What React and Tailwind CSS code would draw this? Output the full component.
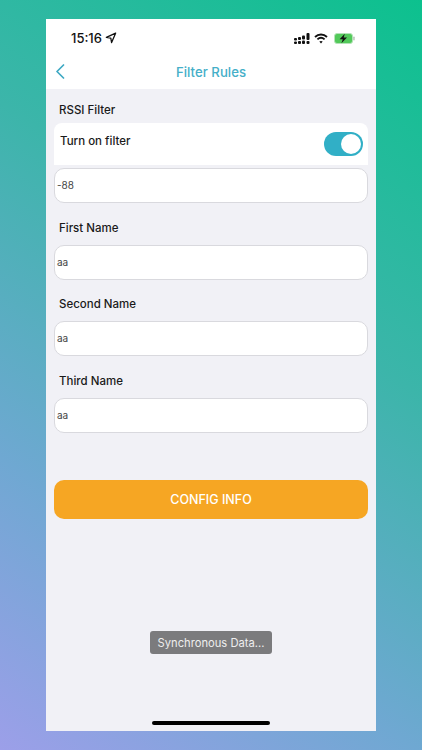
import React from "react";

function StatusIcons() {
  return (
    <div className="flex items-center gap-[4px]">
      <svg width="16" height="11" viewBox="0 0 16 11" fill="#111">
        <rect x="0" y="5" width="3" height="2.6" rx="1" />
        <rect x="0" y="8.4" width="3" height="2.6" rx="1" />
        <rect x="4" y="4" width="3" height="3" rx="1" />
        <rect x="4" y="8" width="3" height="3" rx="1" />
        <rect x="8" y="2.5" width="3" height="4" rx="1" />
        <rect x="8" y="7.4" width="3" height="3.6" rx="1" />
        <rect x="12.5" y="0" width="3" height="7" rx="1" />
        <rect x="12.5" y="8" width="3" height="3" rx="1" />
      </svg>
      <svg width="14" height="11" viewBox="0 0 14 11" fill="none" stroke="#111" strokeWidth="1.9">
        <path d="M1 4 C4.5 0.7 9.5 0.7 13 4" />
        <path d="M3.4 6.4 C5.5 4.5 8.5 4.5 10.6 6.4" />
        <path d="M7 10.6 L5.3 8.6 C6.3 7.9 7.7 7.9 8.7 8.6 Z" fill="#111" stroke="none" />
      </svg>
      <svg width="21" height="11" viewBox="0 0 21 11" className="ml-[2px]">
        <rect x="0.5" y="0.5" width="18" height="10" rx="2.5" fill="#52c95a" stroke="#b5e3b8" />
        <rect x="19.2" y="3.6" width="1.5" height="3.8" rx="0.7" fill="#b5c4b5" />
        <path d="M10.8 0.8 L5.6 6.2 H8.8 L7.4 10.2 L13 4.6 H9.7 Z" fill="#111" />
      </svg>
    </div>
  );
}

function Field({ value }) {
  return (
    <div className="mx-2 flex h-[35px] items-center rounded-[10px] border border-[#d9d9de] bg-white pl-[2px] text-[10px] text-[#444]">
      {value}
    </div>
  );
}

function Label({ children, className }) {
  return <div className={"pl-[13px] text-[11.5px] font-medium leading-[16px] text-[#1a1a1a] " + className}>{children}</div>;
}

export default function App() {
  return (
    <div className="h-[750px] w-[422px] overflow-hidden bg-[linear-gradient(215deg,#0cc18e_0%,#3cb5aa_38%,#6fa8d2_72%,#9c9fe9_100%)] px-[46px] pt-[19px] font-['Inter','Liberation_Sans',sans-serif]">
      <div className="relative flex h-[712px] w-[330px] flex-col bg-[#f1f1f6]">
        <div className="h-[70px] shrink-0 bg-white">
          <div className="flex items-center justify-between pl-[25px] pr-[21px] pt-[11px]">
            <div className="flex items-center gap-[3px] text-[13px] font-medium leading-[16px] text-[#111]">
              15:16
              <svg width="12" height="12" viewBox="0 0 12 12" fill="none" stroke="#111" strokeWidth="1.3" strokeLinejoin="round">
                <path d="M10.6 1.2 L1.4 5.4 L5.8 6.2 L6.6 10.6 Z" />
              </svg>
            </div>
            <StatusIcons />
          </div>
          <div className="relative mt-[14px] text-center text-[13.2px] font-medium leading-[24px] text-[#45afc8]">
            Filter Rules
            <svg className="absolute left-[9px] top-[4px]" width="11" height="15" viewBox="0 0 11 15" fill="none" stroke="#3fa9c4" strokeWidth="1.7" strokeLinecap="round" strokeLinejoin="round">
              <path d="M8.5 1 L2 7.5 L8.5 14" />
            </svg>
          </div>
        </div>

        <Label className="mt-[13px]">RSSI Filter</Label>
        <div className="mx-2 mt-[5px] flex h-[42px] items-start justify-between rounded-t-[8px] bg-white pl-[6px] pr-[5px]">
          <span className="mt-[10px] text-[11.5px] font-medium leading-[16px] text-[#1a1a1a]">Turn on filter</span>
          <div className="mt-[9px] flex h-6 w-[39px] items-center justify-end rounded-full bg-[#31afc6] pr-[2px]">
            <div className="h-[20px] w-[20px] rounded-full bg-white" />
          </div>
        </div>
        <div className="mt-[3px]">
          <Field value="-88" />
        </div>

        <Label className="mt-[17px]">First Name</Label>
        <div className="mt-[9px]">
          <Field value="aa" />
        </div>
        <Label className="mt-[16px]">Second Name</Label>
        <div className="mt-[9px]">
          <Field value="aa" />
        </div>
        <Label className="mt-[17px]">Third Name</Label>
        <div className="mt-[9px]">
          <Field value="aa" />
        </div>

        <div className="mx-2 mt-[47px] flex h-[39px] items-center justify-center rounded-[10px] bg-[#f6a623] pt-[1px] text-[12.5px] font-medium text-white">
          CONFIG INFO
        </div>

        <div className="absolute bottom-[77px] left-[104px] flex h-[23px] w-[122px] items-center justify-center rounded-[3px] bg-[#7b7b7d] pt-[1px] text-[11.2px] text-[#eeeeee]">
          Synchronous Data...
        </div>
        <div className="absolute bottom-[6px] left-[106px] h-[4px] w-[118px] rounded-full bg-black" />
      </div>
    </div>
  );
}
